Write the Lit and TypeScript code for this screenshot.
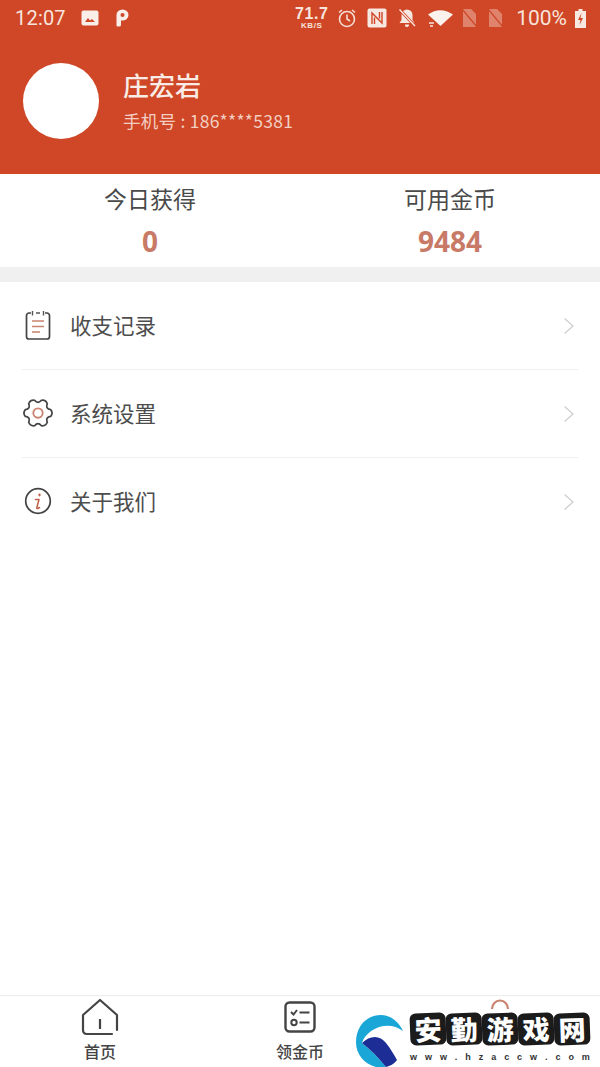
import { LitElement, html, css, svg } from "lit";
import { customElement } from "lit/decorators.js";

const chevron = html`<svg class="chev" width="12" height="18" viewBox="0 0 12 18"><path d="M1.500 1.500 L10 9 L1.500 16.500" fill="none" stroke="#cfcfcf" stroke-width="1.300"/></svg>`;

const noteIcon = html`<svg width="26" height="30" viewBox="0 0 26 30" fill="none"><path d="M6 3H4A2.500 2.500 0 0 0 1.500 5.500v21A2.500 2.500 0 0 0 4 29h18a2.500 2.500 0 0 0 2.500-2.500v-21A2.500 2.500 0 0 0 22 3h-2" stroke="#444" stroke-width="1.700"/><path d="M7.500 1v4.500M18.500 1v4.500M11 3h4" stroke="#555" stroke-width="1.400"/><path d="M7 11h12M7 16.500h12M7 22h8" stroke="#c9836e" stroke-width="1.600"/></svg>`;

function gearPath(): string {
  const c = 16;
  const pt = (deg: number, r: number) => {
    const a = (deg * Math.PI) / 180;
    return `${(c + r * Math.cos(a)).toFixed(2)} ${(c + r * Math.sin(a)).toFixed(2)}`;
  };
  let d = "";
  for (let k = 0; k < 6; k++) {
    const a = k * 60;
    d += `${k === 0 ? "M" : "L"}${pt(a - 15, 14)} Q${pt(a, 16.5)} ${pt(a + 15, 14)} Q${pt(a + 30, 9)} ${pt(a + 45, 14)} `;
  }
  return d + "Z";
}

const gearIcon = html`<svg width="32" height="32" viewBox="0 0 32 32" fill="none"><path d=${gearPath()} stroke="#444" stroke-width="1.800" stroke-linejoin="round"/><circle cx="16" cy="16" r="5" stroke="#c9836e" stroke-width="2"/></svg>`;

const infoIcon = html`<svg width="28" height="28" viewBox="0 0 28 28" fill="none"><circle cx="14" cy="14" r="12.300" stroke="#444" stroke-width="1.700"/><path d="M15.500 7.500v.8" stroke="#c0604a" stroke-width="2.200" stroke-linecap="round"/><path d="M11.500 12.500h3.500l-2.200 8.300q-.2 1 1 .7l1.700-1" stroke="#c0604a" stroke-width="1.500" stroke-linecap="round" stroke-linejoin="round"/></svg>`;

const simOff = svg`<path d="M1 1h8l5 5v13H1z" fill="#fff" opacity=".33"/><path d="M0 1 L15 19" stroke="#cf4726" stroke-width="1.300"/>`;

const urlChars = "www.hzaccw.com".split("");

@customElement("app-root")
export class AppRoot extends LitElement {
  static styles = css`
    :host { display: block; width: 600px; height: 1067px; position: relative; overflow: hidden; background: #fff;
      font-family: "Noto Sans CJK SC", "Liberation Sans", sans-serif; color: #444; }
    .page { display: flex; flex-direction: column; height: 100%; }
    .header { background: #cf4726; height: 174px; box-sizing: border-box; display: flex; flex-direction: column; color: #fff; flex: none; }
    .status { height: 36px; display: flex; align-items: center; padding: 0 14px 0 15px; color: #f8e4dc; flex: none; }
    .time { font: 20px "Roboto", sans-serif; letter-spacing: .2px; margin-right: 14px; width: 52px; }
    .status svg { display: block; flex: none; }
    .m15 { margin-right: 15px; }
    .m11 { margin-right: 11px; }
    .m10 { margin-right: 10px; }
    .m8 { margin-right: 8px; }
    .spacer { flex: 1; }
    .speed { display: flex; flex-direction: column; align-items: center; font-family: "Liberation Sans", sans-serif; font-weight: 700; width: 33px; margin-right: 9px; }
    .speed b { font-size: 16px; line-height: 14px; letter-spacing: .6px; }
    .speed span { font-size: 8px; line-height: 9px; letter-spacing: .6px; }
    .pct { font: 21px "Roboto", sans-serif; margin-right: 8px; margin-left: 13px; color: #f8e4dc; }
    .profile { display: flex; align-items: center; padding: 27px 0 0 23px; gap: 24px; }
    .avatar { width: 76px; height: 76px; border-radius: 50%; background: #fff; flex: none; }
    .info { padding-bottom: 2px; }
    .name { font-size: 26px; line-height: 34px; font-weight: 500; color: #f9ebe5; }
    .phone { font-size: 17.500px; line-height: 24px; color: #f3cfc3; margin-top: 7px; letter-spacing: .25px; }
    .stats { display: grid; grid-template-columns: 1fr 1fr; height: 93px; flex: none; }
    .stat { display: flex; flex-direction: column; align-items: center; padding-top: 7px; }
    .stat .label { font-size: 23px; line-height: 34px; color: #4a4a4a; }
    .stat .value { font: 700 28px/30px "Open Sans", "Liberation Sans", sans-serif; color: #c87a66; margin-top: 11px; }
    .gap { height: 15px; background: #f0f0f0; flex: none; }
    .menu { padding: 0 22px; flex: 1; }
    .row { height: 88px; box-sizing: border-box; border-bottom: 1px solid #efefef; display: flex; align-items: center; padding-bottom: 2px; }
    .row:last-child { border-bottom: none; }
    .ic { width: 30px; display: flex; justify-content: center; margin: 0 18px 0 1px; flex: none; }
    .row .t { font-size: 21.500px; line-height: 30px; color: #4d4d4d; flex: 1; margin-left: -1px; }
    .chev { margin: 2px 3px 0 0; }
    .tabs { height: 72px; border-top: 1px solid #ececec; box-sizing: border-box; display: grid; grid-template-columns: repeat(3, 1fr); flex: none; }
    .tab { display: flex; flex-direction: column; align-items: center; padding-top: 3px; font-size: 16px; font-weight: 500; color: #444; }
    .tab svg { height: 37px; display: block; }
    .tab span { line-height: 22px; margin-top: 4px; }
    .wm { position: absolute; left: 356px; top: 1013px; display: flex; gap: 6px; }
    .logo { margin-top: 2px; }
    .wm-text { display: flex; flex-direction: column; width: 180px; }
    .wm-words { display: flex; }
    .wm-words span { width: 36px; height: 32px; background: #1b1b1b; color: #fff; font-size: 27px; font-weight: 900; line-height: 32px; text-align: center; border-radius: 6px; transform: rotate(-2deg); }
    .wm-url { font: 700 9px/12px "Liberation Sans", sans-serif; color: #333; margin-top: 6px; white-space: nowrap; display: flex; justify-content: space-between; }
  `;

  render() {
    return html`<div class="page">
      <div class="header">
        <div class="status">
          <span class="time">12:07</span>
          <svg class="m15" width="18" height="16" viewBox="0 0 18 16"><rect x="0.500" y="0.500" width="17" height="15" rx="2" fill="#faeee9"/><path d="M4 12l3-4 2 2.500 2-1.500 3 3z" fill="#cf4726"/></svg>
          <svg width="16" height="18" viewBox="0 0 16 18"><path d="M2.500 17V6a6 5.500 0 1 1 6 5.500H7V16q0 1.500-2 1.500T2.500 17z" fill="#faeee9"/><circle cx="8.500" cy="6" r="2" fill="#cf4726"/></svg>
          <span class="spacer"></span>
          <div class="speed"><b>71.7</b><span>KB/S</span></div>
          <svg class="m10" width="20" height="20" viewBox="0 0 20 20" fill="none" stroke="#f6dfd6" stroke-width="1.600"><circle cx="10" cy="11" r="7.500"/><path d="M10 6.500V11l3 2M2 4.500 5 2M18 4.500 15 2"/></svg>
          <svg class="m10" width="20" height="20" viewBox="0 0 20 20"><rect x="0.500" y="0.500" width="19" height="19" rx="2" fill="#f8e8e2"/><path d="M5 16V5l10 10V4" fill="none" stroke="#cf4726" stroke-width="1.400"/><path d="M7.500 16V9.500M12.500 4v6.500" stroke="#cf4726" stroke-width="1.400"/></svg>
          <svg class="m10" width="20" height="20" viewBox="0 0 20 20"><path d="M10 1.500a5.500 5.500 0 0 1 5.500 5.500v5l2 3H2.500l2-3V7A5.500 5.500 0 0 1 10 1.500z M8 16.500h4a2 2 0 0 1-4 1z" fill="#f8e8e2"/><path d="M2.500 1.500 L18 18" stroke="#cf4726" stroke-width="3"/><path d="M2.500 1.500 L18 18" stroke="#f8e8e2" stroke-width="1.300"/></svg>
          <svg class="m8" width="27" height="20" viewBox="0 0 27 20"><path d="M1 6.500Q13-2 26 6.500L13.500 18z" fill="#fbf1ed"/><path d="M2 15h5M3 18h3" stroke="#f8e8e2" stroke-width="1.300"/></svg>
          <svg class="m11" width="15" height="20" viewBox="0 0 15 20">${simOff}</svg>
          <svg width="15" height="20" viewBox="0 0 15 20">${simOff}</svg>
          <span class="pct">100%</span>
          <svg width="11" height="19" viewBox="0 0 11 19"><path d="M3.500 0h4v2H11v17H0V2h3.500z" fill="#f8e8e2"/><path d="M6.500 4 3 11h2.500L4.500 16 8 9H5.500z" fill="#cf4726"/></svg>
        </div>
        <div class="profile">
          <div class="avatar"></div>
          <div class="info">
            <div class="name">庄宏岩</div>
            <div class="phone">手机号 : 186****5381</div>
          </div>
        </div>
      </div>
      <div class="stats">
        <div class="stat"><div class="label">今日获得</div><div class="value">0</div></div>
        <div class="stat"><div class="label">可用金币</div><div class="value">9484</div></div>
      </div>
      <div class="gap"></div>
      <div class="menu">
        <div class="row"><div class="ic">${noteIcon}</div><div class="t">收支记录</div>${chevron}</div>
        <div class="row"><div class="ic">${gearIcon}</div><div class="t">系统设置</div>${chevron}</div>
        <div class="row"><div class="ic">${infoIcon}</div><div class="t">关于我们</div>${chevron}</div>
      </div>
      <div class="tabs">
        <div class="tab">
          <svg width="38" height="37" viewBox="0 0 38 37" fill="none" stroke="#444" stroke-width="2.200"><path d="M31 35H6q-4 0-4-4V16L19 1l17 15v15" stroke-linejoin="round" stroke-linecap="round"/><path d="M19 20v10"/></svg>
          <span>首页</span>
        </div>
        <div class="tab">
          <svg width="32" height="37" viewBox="0 0 32 37" fill="none" stroke="#444" stroke-width="2.400"><rect x="1.500" y="3.500" width="29" height="29" rx="4"/><path d="M7 13l2.500 2.500L13 11M15.500 13.500h10M15.500 23.500h10" stroke-width="2"/><circle cx="10" cy="23.500" r="2.700" stroke-width="2"/></svg>
          <span>领金币</span>
        </div>
        <div class="tab">
          <svg width="20" height="37" viewBox="0 0 20 37" fill="none"><path d="M2 10a8 8.500 0 0 1 16 0" stroke="#c9836e" stroke-width="2.200"/></svg>
        </div>
      </div>
    </div>
    <div class="wm">
      <svg class="logo" width="48" height="54" viewBox="0 0 48 54"><path d="M47 16C42 5 33 0 25 0 10 0 0 12 0 27 0 42 12 53 28 53L30 52C22 42 14 34 6 28 10 14 32 4 47 16Z" fill="#1aa6d6"/><path d="M6 28C14 20 24 20 30 28 35 34 38 40 41 45 38 49 34 51 30 52 22 42 14 34 6 28Z" fill="#1c2d96"/></svg>
      <div class="wm-text">
        <div class="wm-words"><span>安</span><span>勤</span><span>游</span><span>戏</span><span>网</span></div>
        <div class="wm-url">${urlChars.map((c) => html`<span>${c}</span>`)}</div>
      </div>
    </div>`;
  }
}
